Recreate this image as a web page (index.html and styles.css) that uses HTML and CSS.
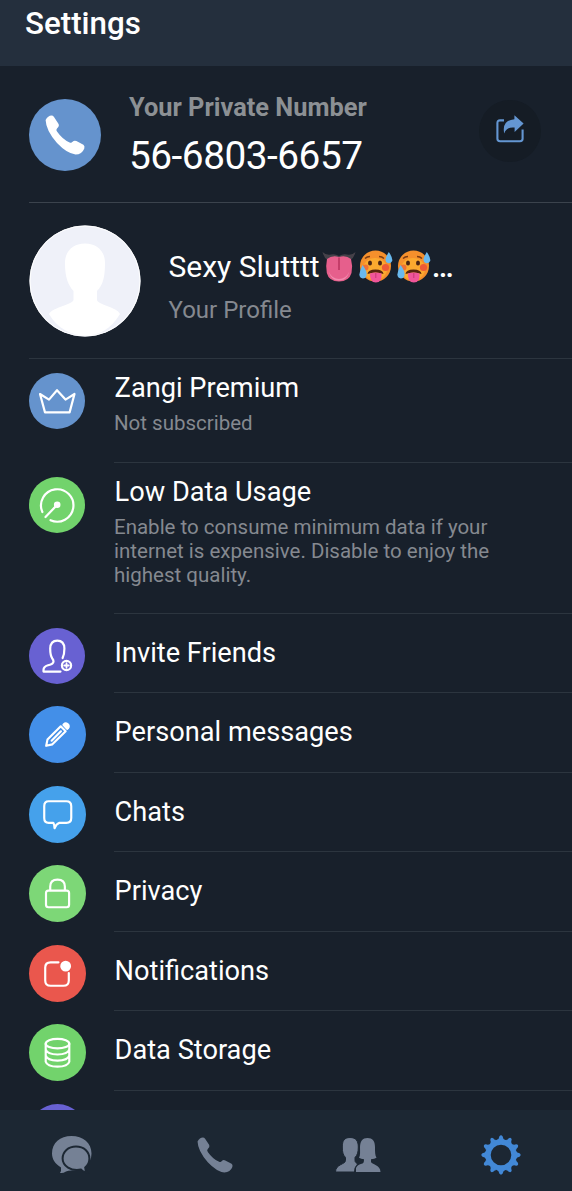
FILE: index.html
```html
<!DOCTYPE html>
<html lang="en">
<head>
    <meta charset="UTF-8">
    <title>Settings</title>
    <link rel="stylesheet" href="styles.css">
</head>
<body>
    <!-- shared shapes -->
    <svg class="defs" width="0" height="0">
        <symbol id="phone" viewBox="0 0 40 40">
            <path d="M0.6 5 Q3 0.8 6.5 0.6 Q8 0.6 9 2 L13.6 9 Q14.6 11.4 12 13.4 Q10.6 14.6 12 16.6 Q17.5 24.5 24.6 27.6 Q26.4 28.4 27.6 26.8 Q29 25 31.4 26 L38.4 29.8 Q40 31 39.3 33.4 Q37 39.4 30.5 39.4 Q22 38.6 12 28 Q1 15.6 0.6 5Z"/>
        </symbol>
        <symbol id="hot" viewBox="0 0 34 34">
            <circle cx="16.5" cy="17" r="15.5" fill="#f5902c"/>
            <ellipse cx="16" cy="20" rx="12" ry="11" fill="#fba92f"/>
            <circle cx="26.5" cy="18.5" r="3.6" fill="#ee5a36"/>
            <circle cx="6.5" cy="18.5" r="3" fill="#ef7135"/>
            <path d="M6 9.5 Q8 7.5 11 7.5 M20 7.5 Q23 7.5 25 9.5" fill="none" stroke="#7a3b12" stroke-width="1.5"/>
            <ellipse cx="11" cy="14" rx="2" ry="2.6" fill="#4a2414"/>
            <ellipse cx="21" cy="14" rx="2" ry="2.6" fill="#4a2414"/>
            <path d="M8.5 25 Q9 20.5 16.5 20.5 Q24 20.5 24.5 25 Q20 23.5 16.5 23.5 Q13 23.5 8.5 25Z" fill="#54240f"/>
            <path d="M11 24.5 Q16.5 22.5 22.5 24.5 Q23.5 33.5 16.8 33.5 Q10.5 33.5 11 24.5Z" fill="#f0559a"/>
            <path d="M16.8 24 V29" stroke="#c93676" stroke-width="1"/>
            <path d="M29.8 3 Q34 9 33.2 12 Q32 14.6 29 14.2 Q26 13.2 26.6 10 Q27 7.5 29.8 3Z" fill="#69b9ee"/>
            <path d="M3.6 16 Q8 22 7.6 26 Q7 29.6 3.8 29.6 Q0.4 29 0.4 25.6 Q0.8 21 3.6 16Z" fill="#69b9ee"/>
        </symbol>
    </svg>

    <div class="header">
        <h1>Settings</h1>
    </div>

    <div class="content">
        <div class="number">
            <div class="number-icon"><svg width="40" height="40"><use href="#phone"/></svg></div>
            <div class="number-text">
                <div class="label">Your Private Number</div>
                <div class="value">56-6803-6657</div>
            </div>
            <div class="share">
                <svg width="28" height="28" viewBox="0 0 28 28">
                    <path d="M8 5.4 H4 Q1.4 5.4 1.4 8 V23.8 Q1.4 26.2 4 26.2 H24 Q26.6 26.2 26.6 23.8 V14.6" fill="none" stroke="#6496d2" stroke-width="2.1"/>
                    <path d="M18.4 0.2 L27.6 8.6 L18.6 17 V12.6 Q10.6 11.6 8.2 18.4 Q5.6 5.4 18.4 4.2Z" fill="#6496d2"/>
                </svg>
            </div>
        </div>

        <div class="profile">
            <svg class="avatar" width="112" height="112" viewBox="0 0 112 112">
                <circle cx="56" cy="56" r="55.5" fill="#eff1f9"/>
                <path d="M56 18.5 C69 18.5 76 27 76 38 C76 52 74 60 68 66 V75 C69 80 88 82 91 89 C82 104 70 110.5 56 110.5 C42 110.5 28 103 20 89 C24 82 43 80 44.5 75 V66 C39 60 36 52 36 38 C36 27 43 18.5 56 18.5Z" fill="#fff"/>
                <circle cx="56" cy="56" r="55" fill="none" stroke="#fff" stroke-width="1"/>
            </svg>
            <div class="profile-text">
                <div class="name">
                    <span>Sexy Slutttt</span>
                    <svg class="tongue" width="34" height="32" viewBox="0 0 34 32">
                        <path d="M0.5 1 Q4 4.5 9 3.5 Q13 2.5 17 5 Q21 2.5 25 3.5 Q30 4.5 33.5 1 Q32 7 28.5 9 L17 11 L5.5 9 Q2 7 0.5 1Z" fill="#454149"/>
                        <path d="M5 8 Q10 4 17 6 Q24 4 29 8 Q31 15 29.5 22 Q27 30.5 17 30.5 Q7 30.5 4.8 22 Q3.5 15 5 8Z" fill="#e65f8c"/>
                        <path d="M7 21 Q10 28 17 28 Q24 28 27 21 Q26 26 22 28.5 Q17 30.5 12 28.5 Q8 26 7 21Z" fill="#f28aae"/>
                        <path d="M17 6.5 V19" stroke="#b8325e" stroke-width="1.5"/>
                    </svg>
                    <svg class="hot" width="34" height="34"><use href="#hot"/></svg>
                    <svg class="hot" width="34" height="34"><use href="#hot"/></svg>
                    <span class="dots">…</span>
                </div>
                <div class="sub">Your Profile</div>
            </div>
        </div>

        <div class="item premium">
            <div class="icon small blue">
                <svg viewBox="0 0 56 56"><path d="M11 21 L20 26.6 L28 17.2 L36.5 26.6 L45.5 21 L40.6 39.4 H16Z"/></svg>
            </div>
            <div class="text">
                <div class="title">Zangi Premium</div>
                <div class="desc">Not subscribed</div>
            </div>
        </div>
        <div class="item data">
            <div class="icon small green">
                <svg viewBox="0 0 56 56">
                    <path d="M13.4 35 A16.2 16.2 0 1 1 21.5 43.2"/>
                    <path d="M16.5 40 L28 28"/>
                    <circle class="solid" cx="28.2" cy="27.8" r="2.2"/>
                </svg>
            </div>
            <div class="text">
                <div class="title">Low Data Usage</div>
                <div class="desc">Enable to consume minimum data if your internet is expensive. Disable to enjoy the highest quality.</div>
            </div>
        </div>
        <div class="item">
            <div class="icon small purple">
                <svg viewBox="0 0 56 56">
                    <path d="M31.5 43.6 H14.5 V42 Q14.500 38.5 19 37.3 Q24.5 36 24.5 33.5 Q24.5 32 23.3 30.5 Q21.2 27.5 21.2 20.5 Q21.5 12.6 28.3 12.6 Q35.2 12.6 35.4 20.5 Q35.4 26.5 33.6 30"/>
                    <circle cx="37.5" cy="37.5" r="4.6"/>
                    <path d="M37.5 35.2 V39.8 M35.2 37.5 H39.8" stroke-width="1.8"/>
                </svg>
            </div>
            <div class="text"><div class="title">Invite Friends</div></div>
        </div>
        <div class="item">
            <div class="icon azure">
                <svg viewBox="0 0 58 58">
                    <path d="M17.5 40.5 L18.8 34.2 L32.3 20.7 L37.3 25.7 L23.8 39Z M23 35.3 L32.5 25.8"/>
                    <path class="solid" d="M35 19.2 L35.5 18.6 Q37.3 16.8 39.2 18.4 Q41.4 20.4 39.6 22.6 L38.8 23.2Z"/>
                </svg>
            </div>
            <div class="text"><div class="title">Personal messages</div></div>
        </div>
        <div class="item">
            <div class="icon sky">
                <svg viewBox="0 0 58 58"><path d="M20 15.5 H38 Q43 15.5 43 20.5 V32.500 Q43 37.5 38 37.5 H31 Q27.5 39 26 43 Q25.8 39 24.8 37.5 H20 Q15.5 37.5 15.5 32.5 V20.5 Q15.5 15.5 20 15.5Z"/></svg>
            </div>
            <div class="text"><div class="title">Chats</div></div>
        </div>
        <div class="item">
            <div class="icon lime">
                <svg viewBox="0 0 58 58">
                    <rect x="17.3" y="26" width="23.5" height="17" rx="2.5"/>
                    <path d="M21.6 25.5 V22 Q21.6 14.8 29 14.8 Q36.5 14.8 36.5 22 V25.5"/>
                </svg>
            </div>
            <div class="text"><div class="title">Privacy</div></div>
        </div>
        <div class="item">
            <div class="icon red">
                <svg viewBox="0 0 58 58">
                    <path d="M30 17.6 H22 Q16.5 17.6 16.5 23 V36 Q16.5 41.5 22 41.5 H35 Q40.5 41.5 40.5 36 V28.5"/>
                    <circle class="solid" cx="37.3" cy="21.5" r="4.4"/>
                </svg>
            </div>
            <div class="text"><div class="title">Notifications</div></div>
        </div>
        <div class="item">
            <div class="icon green">
                <svg viewBox="0 0 58 58">
                    <ellipse cx="29" cy="20" rx="12" ry="4.8"/>
                    <path d="M17 20 V38.4 Q18.5 43.4 29 43.4 Q39.5 43.4 41 38.4 V20 M17 26 Q18.5 31 29 31 Q39.5 31 41 26 M17 32.2 Q18.5 37.2 29 37.2 Q39.5 37.2 41 32.2"/>
                </svg>
            </div>
            <div class="text"><div class="title">Data Storage</div></div>
        </div>
        <div class="item">
            <div class="icon purple"></div>
            <div class="text"></div>
        </div>
    </div>

    <div class="nav">
        <div class="tab">
            <svg width="42" height="40" viewBox="0 0 42 40">
                <path d="M20.5 1 C32 1 40.5 8 40.5 18.5 C40.5 29 32 35.5 20.5 35.5 Q17 35.5 15 36.5 Q12 38.5 9 38 Q10.5 36 10 32.5 C4 29 1 24 1 18.5 C1 8 9 1 20.5 1Z"/>
                <path class="inner" d="M25 11.5 C33 11.5 38.4 16.8 38.4 23.500 C38.4 27.500 36.8 30.500 34.200 32.500 Q34.200 35.500 36 37.500 Q32 37 30 34.600 C20 36.500 11.600 31 11.600 23.500 C11.600 16.800 17.200 11.500 25 11.500Z"/>
            </svg>
        </div>
        <div class="tab"><svg width="36" height="36"><use href="#phone"/></svg></div>
        <div class="tab">
            <svg width="46" height="36" viewBox="0 0 46 36">
                <path d="M32.5 1 C37.5 1 40 4 40 10 C40 15 40 18 41.5 20.8 Q39.5 22.2 36 22.2 V25 C36.5 27.5 45.5 27.5 45.5 35 H21 V31 Q22 27.5 27.5 26.5 Q29 26 29 22.2 Q26 22.2 24 20.8 C25.5 18 25 15 25 10 C25.3 4 27.5 1 32.5 1Z"/>
                <path class="edge" d="M15 0.5 C21 0.5 23.3 4 23.3 10 C23.3 15 22.5 18 20 20.5 V23.5 C20 26.5 24 26 21.5 28.5 Q19.5 30.5 19.5 35 H0.5 C0.5 27 10.5 27.5 10.5 23.5 V20.5 C8 18 7.3 15 7.3 10 C7.3 4 9 0.5 15 0.5Z"/>
            </svg>
        </div>
        <div class="tab active">
            <svg width="40" height="40" viewBox="-20 -20 40 40">
                <circle r="13" fill="none" stroke="#4288d6" stroke-width="5.400"/>
                <g id="teeth">
                    <path id="tooth" d="M-4 -15 Q-1.900 -16 -1.700 -18.500 Q0 -20.800 1.700 -18.500 Q1.900 -16 4 -15Z"/>
                    <use href="#tooth" transform="rotate(30)"/>
                    <use href="#tooth" transform="rotate(60)"/>
                </g>
                <use href="#teeth" transform="rotate(90)"/>
                <use href="#teeth" transform="rotate(180)"/>
                <use href="#teeth" transform="rotate(270)"/>
            </svg>
        </div>
    </div>
</body>
</html>
```
FILE: styles.css
```css
* {
    box-sizing: border-box;
}

body {
    margin: 0;
    height: 1191px;
    display: flex;
    flex-direction: column;
    overflow: hidden;
    background-color: #18202b;
    color: #fff;
    font-family: Roboto, sans-serif;
}

svg {
    display: block;
    flex-shrink: 0;
}

.defs {
    position: absolute;
}

.header {
    height: 66px;
    flex-shrink: 0;
    padding: 5px 25px;
    background-color: #242f3d;
}

h1 {
    margin: 0;
    font-size: 31.3px;
    font-weight: 500;
    line-height: 38px;
}

.content {
    flex: 1;
    min-height: 0;
    overflow: hidden;
}

.number {
    display: flex;
    height: 137px;
    margin-left: 28.5px;
    border-bottom: 1px solid #3b434d;
}

.number-icon {
    width: 72px;
    height: 72px;
    margin-top: 32.5px;
    padding: 16px;
    border-radius: 50%;
    background-color: #6593cd;
    fill: #fff;
}

.number-text {
    flex: 1;
    margin-left: 28.5px;
    padding-top: 26px;
}

.label {
    color: #8c9094;
    font-size: 25.4px;
    font-weight: 700;
    line-height: 30px;
}

.value {
    margin-top: 10px;
    font-size: 38.8px;
    line-height: 48px;
    letter-spacing: -0.5px;
}

.share {
    width: 62px;
    height: 62px;
    margin: 34px 31px 0 0;
    padding: 15px 17px;
    border-radius: 50%;
    background-color: #151c25;
}

.profile {
    display: flex;
    height: 156px;
    margin-left: 28.5px;
    padding-top: 21.5px;
    border-bottom: 1px solid #2c353f;
}

.profile-text {
    margin-left: 28px;
    padding-top: 23.5px;
}

.name {
    display: flex;
    height: 38px;
    font-size: 30px;
    line-height: 38px;
}

.tongue {
    margin: 3px 3px 0 2px;
}

.hot {
    margin: 1px 4px 0 0;
}

.dots {
    margin-left: -3px;
    font-size: 31px;
    font-weight: 500;
}

.sub {
    margin-top: 9px;
    color: #858990;
    font-size: 24px;
    line-height: 30px;
}

.item {
    display: flex;
    height: 79.5px;
    padding-left: 28.5px;
}

.icon {
    width: 57px;
    height: 57px;
    margin-top: 13px;
    border-radius: 50%;
}

.small {
    width: 56px;
    height: 56px;
    margin-top: 14px;
    margin-right: 1px;
}

.icon svg {
    fill: none;
    stroke: #fff;
    stroke-width: 2.2;
    stroke-linejoin: round;
    stroke-linecap: round;
}

.icon .solid {
    fill: #fff;
}

.text {
    flex: 1;
    margin-left: 28.5px;
    padding-top: 23px;
    border-bottom: 1px solid #2c353f;
}

.title {
    padding-left: 0.6px;
    font-size: 27.2px;
    line-height: 32px;
}

.desc {
    width: 400px;
    margin-top: 7px;
    color: #858990;
    font-size: 20.5px;
    line-height: 24px;
}

.premium {
    height: 104px;
}

.data {
    height: 150.5px;
}

.premium .text,
.data .text {
    padding-top: 13px;
}

.blue { background-color: #6593cd; }
.green { background-color: #72d36c; }
.purple { background-color: #6861d2; }
.azure { background-color: #438fe8; }
.sky { background-color: #45a1eb; }
.lime { background-color: #7dd777; }
.red { background-color: #ea574d; }

.nav {
    display: flex;
    height: 81px;
    flex-shrink: 0;
    background-color: #1c2733;
}

.tab {
    flex: 1;
    display: flex;
    align-items: center;
    justify-content: center;
    padding-top: 9px;
    fill: #758195;
}

.active {
    fill: #4288d6;
}

.inner {
    stroke: #1c2733;
    stroke-width: 2;
}

.edge {
    stroke: #1c2733;
    stroke-width: 1;
}
```
